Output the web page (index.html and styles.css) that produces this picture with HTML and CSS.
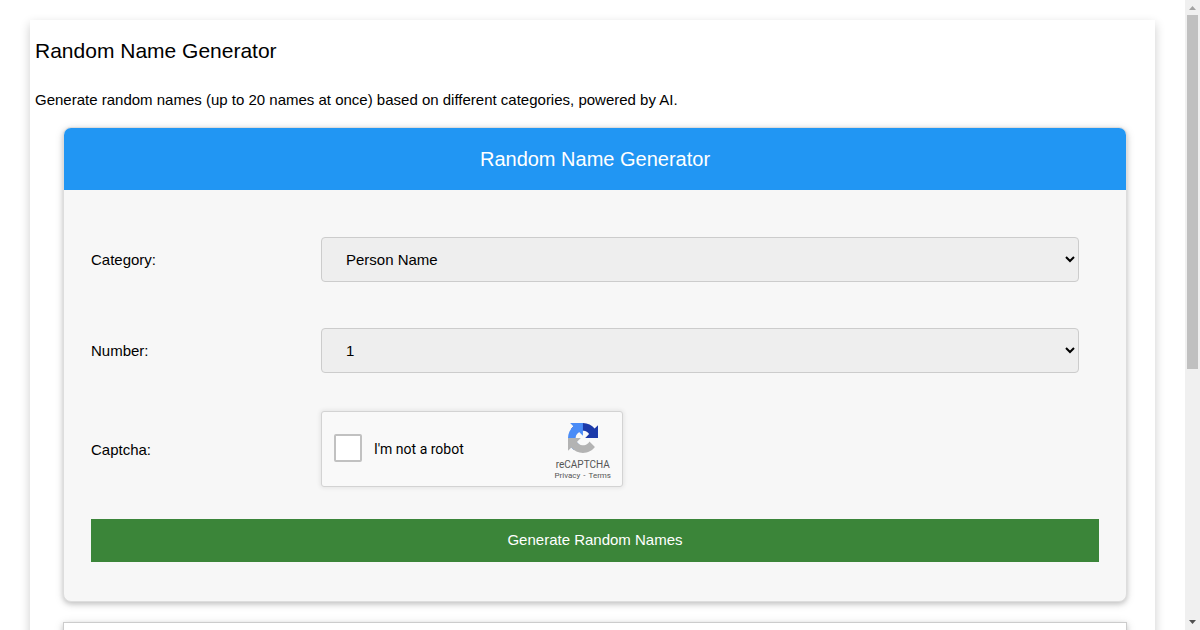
FILE: index.html
```html
<!DOCTYPE html>
<html lang="en">
<head>
<meta charset="utf-8">
<title>Random Name Generator</title>
<link rel="stylesheet" href="styles.css">
</head>
<body>
<div class="viewport">
  <main class="page">
    <h1 class="page-title">Random Name Generator</h1>
    <p class="intro">Generate random names (up to 20 names at once) based on different categories, powered by AI.</p>
    <section class="card">
      <h2 class="card-header">Random Name Generator</h2>
      <form class="form">
        <div class="row">
          <label for="category">Category:</label>
          <select class="select" id="category"><option>Person Name</option></select>
        </div>
        <div class="row">
          <label for="number">Number:</label>
          <select class="select" id="number"><option>1</option></select>
        </div>
        <div class="row row-captcha">
          <span>Captcha:</span>
          <div class="captcha">
            <input class="captcha-box" type="checkbox" id="robot">
            <label class="captcha-label" for="robot">I'm not a robot</label>
            <div class="captcha-brand">
              <svg class="captcha-logo" viewBox="0 0 64 64" aria-hidden="true">
                <path fill="#1c3aa9" d="M64 31.955l-.033-1.37V4.687l-7.16 7.16C50.948 4.674 42.033.093 32.05.093c-10.4 0-19.622 4.96-25.458 12.64l11.736 11.86a15.55 15.55 0 0 1 4.754-5.334c2.05-1.6 4.952-2.906 8.968-2.906.485 0 .86.057 1.135.163 4.976.393 9.288 3.14 11.828 7.124l-8.307 8.307L64 31.953"/>
                <path fill="#4a8cf7" d="M31.862.094l-1.37.033H4.594l7.16 7.16C4.58 13.147 0 22.06 0 32.046c0 10.4 4.96 19.622 12.64 25.458l11.86-11.736a15.55 15.55 0 0 1-5.334-4.754c-1.6-2.05-2.906-4.952-2.906-8.968 0-.485.057-.86.163-1.135.393-4.976 3.14-9.288 7.124-11.828l8.307 8.307L31.86.095"/>
                <path fill="#b3b3b3" d="M.001 32.045l.033 1.37v25.898l7.16-7.16c5.86 7.173 14.774 11.754 24.76 11.754 10.4 0 19.622-4.96 25.458-12.64l-11.736-11.86a15.55 15.55 0 0 1-4.754 5.334c-2.05 1.6-4.952 2.906-8.968 2.906-.485 0-.86-.057-1.135-.163-4.976-.393-9.288-3.14-11.828-7.124l8.307-8.307c-10.522.04-22.4.066-27.295-.005"/>
              </svg>
              <span class="captcha-name">reCAPTCHA</span>
              <span class="captcha-links"><a href="#privacy">Privacy</a><span>-</span><a href="#terms">Terms</a></span>
            </div>
          </div>
        </div>
        <button class="submit" type="button">Generate Random Names</button>
      </form>
    </section>
    <section class="results"></section>
  </main>
  <div class="scrollbar" aria-hidden="true">
    <svg class="scroll-arrow" viewBox="0 0 15 15"><path fill="#a3a3a3" d="M4 10h7L7.500 6z"/></svg>
    <div class="scroll-track"><div class="scroll-thumb"></div></div>
    <svg class="scroll-arrow" viewBox="0 0 15 15"><path fill="#505050" d="M4 5h7L7.500 9z"/></svg>
  </div>
</div>
</body>
</html>
```

FILE: styles.css
```css
* {
  box-sizing: border-box;
}

body {
  margin: 0;
  background: #fff;
  color: #000;
  font: 15px/23px "Liberation Sans", Arial, sans-serif;
}

.viewport {
  display: flex;
  height: 100vh;
  overflow: hidden;
}

.page {
  flex: 1;
  align-self: flex-start;
  min-height: 100vh;
  margin: 20px 30px 0;
  padding: 15px 5px 0;
  box-shadow: 0 4px 10px 0 rgba(0, 0, 0, 0.2);
}

.page-title {
  margin: 0;
  font-size: 21px;
  font-weight: 400;
  line-height: 32px;
}

.intro {
  margin: 21px 0 16px;
}

.card {
  margin: 0 23px 20px 28px;
  border: 1px solid #ddd;
  border-radius: 8px;
  background: #f7f7f7;
  box-shadow: 0 2px 5px 0 rgba(0, 0, 0, 0.16), 0 2px 10px 0 rgba(0, 0, 0, 0.12);
}

.card-header {
  margin: 0;
  padding: 16px;
  border-radius: 7px 7px 0 0;
  background: #2196f3;
  color: #fff;
  font-size: 20px;
  font-weight: 400;
  line-height: 30px;
  text-align: center;
}

.form {
  padding: 47px 27px 39px;
}

.row {
  display: grid;
  grid-template-columns: 230px 1fr;
  align-items: center;
  margin-bottom: 46px;
  padding-right: 20px;
}

.row-captcha {
  margin: -8px 0 32px;
}

.select {
  width: 100%;
  height: 45px;
  padding: 0 0 0 20px;
  border: 1px solid #ccc;
  border-radius: 4px;
  background: #eee;
  color: #000;
  font: inherit;
}

.captcha {
  display: flex;
  align-items: center;
  width: 302px;
  height: 76px;
  padding: 0 11px 0 12px;
  border: 1px solid #d3d3d3;
  border-radius: 3px;
  background: #f9f9f9;
  box-shadow: 0 0 4px 1px rgba(0, 0, 0, 0.08);
  font-family: Roboto, sans-serif;
}

.captcha-box {
  appearance: none;
  width: 28px;
  height: 28px;
  margin: 0 12px 2px 0;
  border: 2px solid #c1c1c1;
  border-radius: 2px;
  background: #fff;
}

.captcha-label {
  flex: 1;
  font-size: 14px;
  line-height: 17px;
}

.captcha-brand {
  display: flex;
  flex-direction: column;
  align-items: center;
  padding-top: 6px;
  color: #555;
}

.captcha-logo {
  width: 30px;
  height: 30px;
  margin-bottom: 5px;
}

.captcha-name {
  font-size: 10px;
  line-height: 13px;
}

.captcha-links {
  display: flex;
  gap: 3px;
  font-size: 8px;
  line-height: 10px;
}

.captcha-links a {
  color: inherit;
  text-decoration: none;
}

.submit {
  display: block;
  width: 100%;
  padding: 9px 16px 11px;
  border: 0;
  background: #3b8539;
  color: #fff;
  font: inherit;
}

.results {
  height: 200px;
  margin: 0 23px 0 28px;
  border: 1px solid #ccc;
  box-shadow: 0 2px 5px 0 rgba(0, 0, 0, 0.16), 0 2px 10px 0 rgba(0, 0, 0, 0.12);
}

.scrollbar {
  display: flex;
  flex-direction: column;
  width: 15px;
  background: #f0f0f0;
}

.scroll-arrow {
  width: 15px;
  height: 15px;
}

.scroll-track {
  flex: 1;
  padding: 0 2px;
}

.scroll-thumb {
  height: 59%;
  background: #c0c0c0;
}
```
